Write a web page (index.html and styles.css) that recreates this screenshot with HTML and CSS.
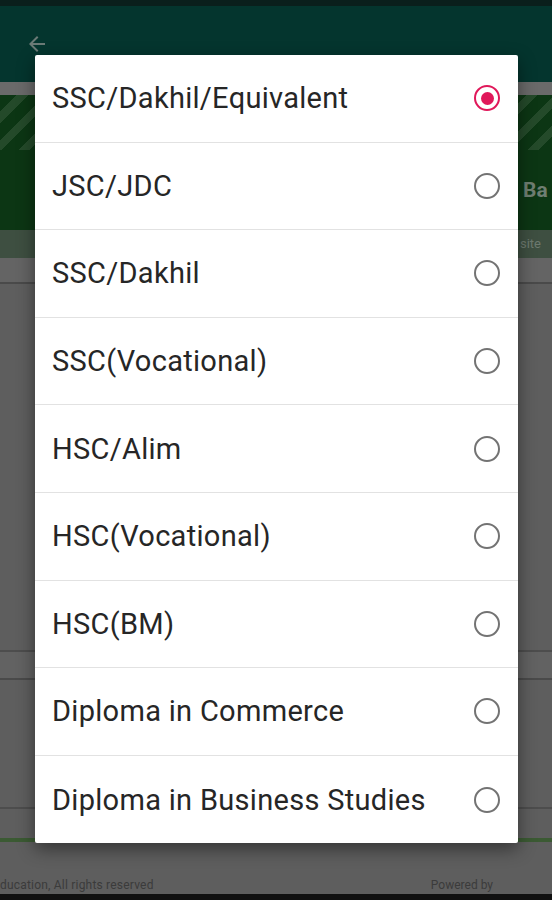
FILE: index.html
```html
<!DOCTYPE html>
<html lang="en">
<head>
    <meta charset="UTF-8">
    <meta name="viewport" content="width=device-width, initial-scale=1.0">
    <title>Select Exam</title>
    <link rel="stylesheet" href="styles.css">
</head>
<body>
    <div class="status"></div>
    <div class="appbar">
        <svg class="back" width="24" height="24" viewBox="0 0 24 24">
            <path d="M20 11H7.83l5.59-5.59L12 4l-8 8 8 8 1.41-1.41L7.83 13H20v-2z" fill="#6b7a76"/>
        </svg>
    </div>

    <div class="page">
        <div class="strip-top"></div>
        <div class="banner">
            <span class="banner-title">Ba</span>
        </div>
        <div class="banner-site">site</div>
        <div class="strip-light"></div>
        <div class="area area-one"></div>
        <div class="strip-mid"></div>
        <div class="area area-two"></div>
        <div class="area area-three"></div>
        <div class="green-line"></div>
        <div class="footer">
            <span class="copy">ducation, All rights reserved</span>
            <span class="powered">Powered by</span>
        </div>
        <div class="navbar"></div>
    </div>

    <div class="dialog">
        <label class="option">
            <span>SSC/Dakhil/Equivalent</span>
            <span class="radio checked"></span>
        </label>
        <label class="option">
            <span>JSC/JDC</span>
            <span class="radio"></span>
        </label>
        <label class="option">
            <span>SSC/Dakhil</span>
            <span class="radio"></span>
        </label>
        <label class="option">
            <span>SSC(Vocational)</span>
            <span class="radio"></span>
        </label>
        <label class="option">
            <span>HSC/Alim</span>
            <span class="radio"></span>
        </label>
        <label class="option">
            <span>HSC(Vocational)</span>
            <span class="radio"></span>
        </label>
        <label class="option">
            <span>HSC(BM)</span>
            <span class="radio"></span>
        </label>
        <label class="option">
            <span>Diploma in Commerce</span>
            <span class="radio"></span>
        </label>
        <label class="option">
            <span>Diploma in Business Studies</span>
            <span class="radio"></span>
        </label>
    </div>
</body>
</html>
```

FILE: styles.css
```css
body {
    margin: 0;
    padding: 0;
    width: 552px;
    height: 900px;
    overflow: hidden;
    font-family: Roboto, "Noto Sans", sans-serif;
    background: #5e5e5e;
}

.status {
    height: 6px;
    background: #0a1f1c;
}

.appbar {
    height: 76px;
    background: #04352e;
    display: flex;
    align-items: center;
    padding-left: 25px;
}

.back {
    margin-top: -1px;
}

.page {
    display: flex;
    flex-direction: column;
}

.strip-top {
    height: 13px;
    background: #6a6a6a;
}

.banner {
    height: 135px;
    background-color: #0c3614;
    background-image: repeating-linear-gradient(135deg, #0c3614 0px, #0c3614 12px, #244a2a 12px, #244a2a 20px);
    background-size: 100% 55px;
    background-repeat: no-repeat;
    display: flex;
    align-items: flex-end;
    padding-left: 523px;
    padding-bottom: 28px;
    box-sizing: border-box;
}

.banner-title {
    color: #6f7e72;
    font-weight: bold;
    font-size: 21px;
    white-space: nowrap;
}

.banner-site {
    height: 28px;
    background: #3e4f41;
    color: #6d7a6f;
    font-size: 13px;
    line-height: 28px;
    padding-left: 520px;
    white-space: nowrap;
}

.strip-light {
    height: 24px;
    background: #646464;
    border-bottom: 2px solid #4a4a4a;
}

.area-one {
    height: 366px;
    border-bottom: 2px solid #4d4d4d;
}

.strip-mid {
    height: 26px;
    background: #626262;
    border-bottom: 2px solid #4a4a4a;
}

.area-two {
    height: 127px;
    border-bottom: 2px solid #4d4d4d;
}

.area-three {
    height: 29px;
}

.green-line {
    height: 4px;
    background: #3b5a33;
}

.footer {
    height: 52px;
    display: flex;
    justify-content: space-between;
    align-items: flex-end;
    font-size: 12px;
    color: #3b3b3b;
    padding-bottom: 2px;
    box-sizing: border-box;
}

.copy {
    letter-spacing: 0.2px;
}

.powered {
    margin-right: 59px;
}

.navbar {
    height: 6px;
    background: #111;
}

.dialog {
    position: absolute;
    left: 35px;
    top: 55px;
    width: 483px;
    background: #fff;
    border-radius: 2px;
    box-shadow: 0 6px 18px rgba(0, 0, 0, 0.45);
    display: flex;
    flex-direction: column;
}

.option {
    height: 87.6px;
    box-sizing: border-box;
    display: flex;
    align-items: center;
    justify-content: space-between;
    padding: 0 18px 0 17px;
    font-size: 29px;
    letter-spacing: 0.3px;
    color: #262626;
    border-bottom: 1px solid #e2e2e2;
}

.option:last-child {
    border-bottom: none;
}

.radio {
    width: 26px;
    height: 26px;
    box-sizing: border-box;
    border: 2px solid #737373;
    border-radius: 50%;
    display: flex;
    align-items: center;
    justify-content: center;
}

.radio.checked {
    border-color: #e0185a;
}

.radio.checked::after {
    content: "";
    width: 13px;
    height: 13px;
    border-radius: 50%;
    background: #e0185a;
}
```
